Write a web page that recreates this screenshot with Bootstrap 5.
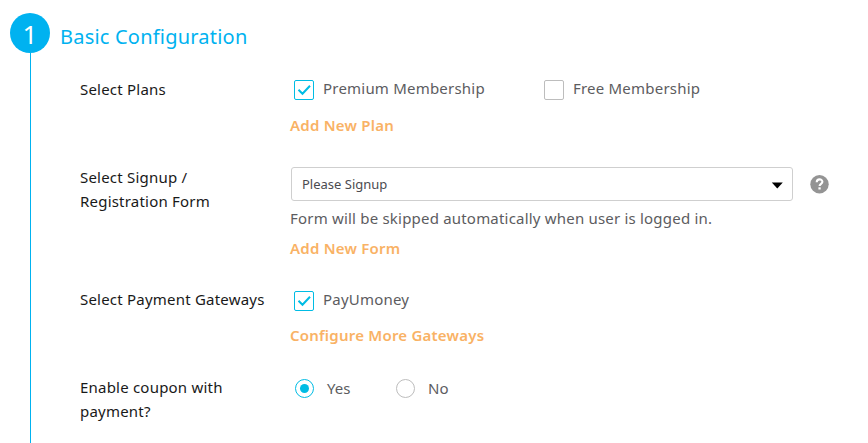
<!DOCTYPE html>
<html lang="en">
<head>
<meta charset="utf-8">
<meta name="viewport" content="width=device-width, initial-scale=1">
<title>Basic Configuration</title>
<link href="https://cdn.jsdelivr.net/npm/bootstrap@5.3.0/dist/css/bootstrap.min.css" rel="stylesheet">
<style>
body{font-family:"Noto Sans",sans-serif;font-size:15px;line-height:24px;color:#5c5c60;background:#fff;height:443px;overflow:hidden}
.rail{width:40px;margin-left:10px;padding-top:13px}
.step-no{width:40px;height:40px;background:#00b2f0;color:#fff;font-size:26px;line-height:42px}
.rail-line{width:1px;background:#00b2f0}
.step-title{font-size:20px;line-height:28px;color:#00b2f0;margin:23px 0 26px 10px;letter-spacing:.21px}
.fields{margin-left:30px}
.field-label{width:210px;color:#191919;letter-spacing:.21px}
.plan-row,.gateway-row{height:88px}
.form-row{height:122px}
.opt{height:24px}
.opt .form-check-input{width:20px;height:20px;border:1px solid #bdbdbd;background-size:20px}
.opt .form-check-input[type=checkbox]{border-radius:2px;margin:3px 9px 0 4px}
.gateway-row .opt .form-check-input[type=checkbox]{margin-top:4px}
.opt .form-check-input[type=radio]{width:19px;height:19px;margin:1px 13px 0 5px}
.opt .form-check-input:checked{background-color:#fff;border-color:#00bce4}
.opt .form-check-input:checked[type=checkbox]{background-image:url("data:image/svg+xml,%3csvg xmlns='http://www.w3.org/2000/svg' viewBox='0 0 20 20'%3e%3cpath fill='none' stroke='%2300bce4' stroke-width='2' d='M4.5 9.8l4 4 7.5-8'/%3e%3c/svg%3e")}
.opt .form-check-input:checked[type=radio]{background-image:url("data:image/svg+xml,%3csvg xmlns='http://www.w3.org/2000/svg' viewBox='0 0 20 20'%3e%3ccircle cx='10' cy='10' r='4.5' fill='%2300bce4'/%3e%3c/svg%3e")}
.opt-text{letter-spacing:.21px}
.plan-row .opt-text{margin-top:-1px}
.radio-row{padding-top:1px}
.plan-opt{width:250px}
.yes-opt{width:101px}
.act{color:#f9b265;font-weight:600;letter-spacing:.22px}
.act:hover{color:#f9b265}
.picker-line{padding-top:2px}
.picker{width:502px;height:34px;margin-left:1px;border:1px solid #cfcfcf;border-radius:3px;font-size:13px;color:#4b4b50;padding:0 9px 0 10px}
.help{margin:1px 0 0 17px}
.hint{margin:5px 0 6px;letter-spacing:.2px}
</style>
<script src="https://cdn.jsdelivr.net/npm/bootstrap@5.3.0/dist/js/bootstrap.bundle.min.js"></script>
</head>
<body>
<main class="d-flex h-100">
  <div class="rail d-flex flex-column align-items-center flex-shrink-0">
    <div class="step-no rounded-circle text-center flex-shrink-0">1</div>
    <div class="rail-line flex-grow-1"></div>
  </div>
  <section>
    <h2 class="step-title fw-normal">Basic Configuration</h2>
    <form class="fields">
      <div class="plan-row d-flex">
        <div class="field-label">Select Plans</div>
        <div>
          <div class="d-flex">
            <label class="opt plan-opt d-flex align-items-start"><input class="form-check-input" type="checkbox" checked><span class="opt-text">Premium Membership</span></label>
            <label class="opt d-flex align-items-start"><input class="form-check-input" type="checkbox"><span class="opt-text">Free Membership</span></label>
          </div>
          <a href="#" class="act d-inline-block text-decoration-none mt-2 pt-1">Add New Plan</a>
        </div>
      </div>
      <div class="form-row d-flex">
        <div class="field-label">Select Signup /<br>Registration Form</div>
        <div>
          <div class="picker-line d-flex align-items-center">
            <div class="picker d-flex align-items-center justify-content-between" role="combobox" tabindex="0">
              <span>Please Signup</span>
              <svg width="12" height="9" viewBox="0 0 12 9"><path d="M.8 2.5h11L6.3 8.4z" fill="#000"/></svg>
            </div>
            <svg class="help" width="19" height="19" viewBox="0 0 19 19"><circle cx="9.5" cy="9.3" r="9.2" fill="#949494"/><path d="M6.7 7.2C6.8 3.4 12.4 3.6 12.4 6.8c0 2-2.8 2-2.8 4.2" fill="none" stroke="#fff" stroke-width="2.1"/><path d="M8.4 12.3h2.3v2.2H8.4z" fill="#fff"/></svg>
          </div>
          <div class="hint">Form will be skipped automatically when user is logged in.</div>
          <a href="#" class="act d-inline-block text-decoration-none">Add New Form</a>
        </div>
      </div>
      <div class="gateway-row d-flex">
        <div class="field-label">Select Payment Gateways</div>
        <div>
          <label class="opt d-flex align-items-start"><input class="form-check-input" type="checkbox" checked><span class="opt-text">PayUmoney</span></label>
          <a href="#" class="act d-inline-block text-decoration-none mt-2 pt-1">Configure More Gateways</a>
        </div>
      </div>
      <div class="d-flex">
        <div class="field-label">Enable coupon with<br>payment?</div>
        <div class="radio-row d-flex">
          <label class="opt yes-opt d-flex align-items-center"><input class="form-check-input" type="radio" name="coupon" checked><span>Yes</span></label>
          <label class="opt d-flex align-items-center"><input class="form-check-input" type="radio" name="coupon"><span>No</span></label>
        </div>
      </div>
    </form>
  </section>
</main>
</body>
</html>
